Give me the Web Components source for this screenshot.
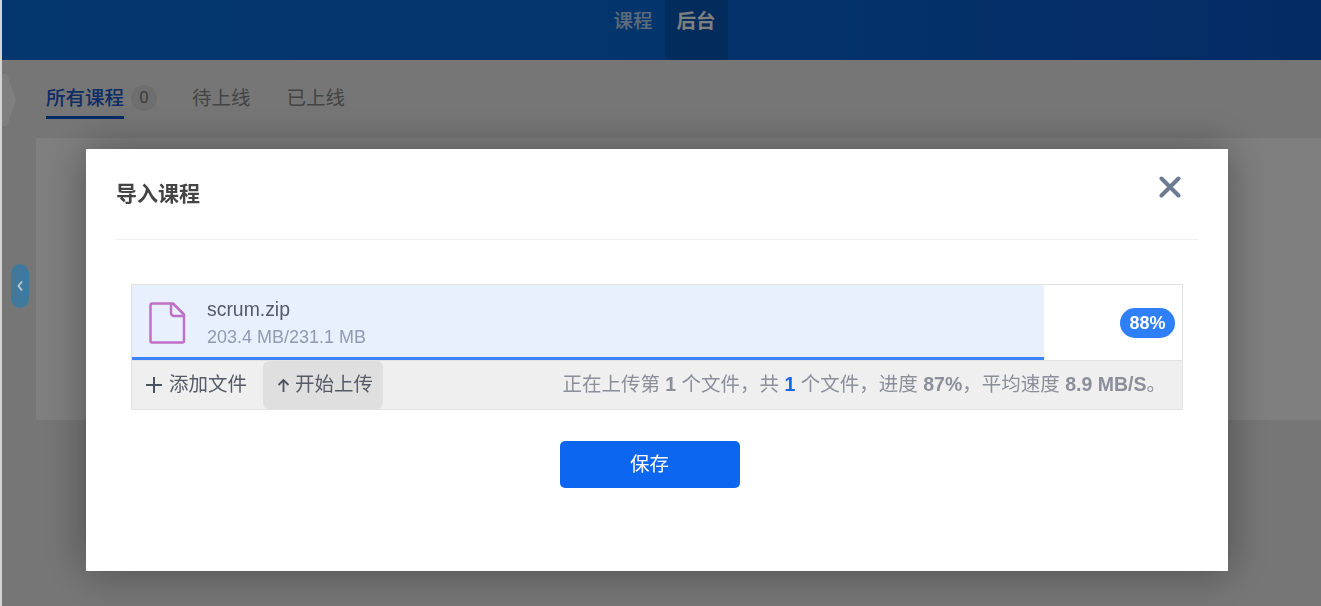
<!DOCTYPE html>
<html lang="zh">
<head>
<meta charset="utf-8">
<title>导入课程</title>
<style>
html, body { margin: 0; height: 100%; overflow: hidden; }
body {
  background: #ececec;
  border-left: 2px solid #d4d4d4;
  box-sizing: border-box;
  font-family: "Liberation Sans", "Noto Sans CJK SC", sans-serif;
  font-size: 19.5px;
}
</style>
</head>
<body>
<app-header></app-header>
<course-tabs></course-tabs>
<course-panel></course-panel>
<side-notch></side-notch>
<side-toggle></side-toggle>
<import-dialog>
  <upload-box></upload-box>
</import-dialog>

<script>
function defineEl(name, html) {
  customElements.define(name, class extends HTMLElement {
    constructor() {
      super();
      this.attachShadow({mode: 'open'}).innerHTML = html;
    }
  });
}

defineEl('app-header', `
<style>
:host {
  display: flex;
  justify-content: center;
  height: 60px;
  padding-left: 6px;
  background: linear-gradient(90deg, #0a6ede 0%, #0869d8 50%, #0a56ca 100%);
}
a {
  display: block;
  padding: 0 12px;
  height: 60px;
  line-height: 43px;
  font-weight: 500;
  color: #ffffff;
  opacity: .72;
}
a.on { background: rgba(0,0,0,.14); opacity: 1; font-weight: 700; }
</style>
<a>课程</a><a class="on">后台</a>
`);

defineEl('course-tabs', `
<style>
:host {
  display: flex;
  align-items: flex-start;
  height: 78px;
  padding-left: 44px;
  color: #888;
}
span { display: block; margin-top: 24px; line-height: 28px; }
.on { color: #1a5ac8; font-weight: 500; border-bottom: 3px solid #0a56c8; box-sizing: border-box; height: 35px; }
.num {
  width: 26px; height: 26px; line-height: 26px; margin: 25px 0 0 7px;
  border-radius: 50%; background: #ddd; text-align: center; font-size: 16px; color: #777;
}
.next { margin-left: 35px; }
.next + .next { margin-left: 36px; }
</style>
<span class="on">所有课程</span><span class="num">0</span>
<span class="next">待上线</span><span class="next">已上线</span>
`);

defineEl('course-panel', `
<style>
:host {
  display: block;
  height: 282px;
  margin-left: 34px;
  background: #fff;
}
</style>
`);

defineEl('side-notch', `
<style>
:host {
  position: fixed;
  left: 2px;
  top: 74px;
  width: 14px;
  height: 52px;
  background: #fff;
  clip-path: polygon(0 0, 35% 0, 100% 50%, 35% 100%, 0 100%);
}
</style>
`);

defineEl('side-toggle', `
<style>
:host {
  position: fixed;
  z-index: 20;
  left: 11px;
  top: 264px;
  width: 18px;
  height: 44px;
  border-radius: 9px;
  background: #3f7a9e;
  display: flex;
  align-items: center;
  justify-content: center;
}
</style>
<svg width="8" height="12" viewBox="0 0 8 12"><path d="M6 1.5 2.500 6l3.500 4.500" fill="none" stroke="#b9c6cc" stroke-width="2"/></svg>
`);

defineEl('import-dialog', `
<style>
:host {
  position: fixed;
  z-index: 10;
  inset: 0 0 0 2px;
  background: rgba(0,0,0,.5);
}
.modal {
  position: absolute;
  left: 84px;
  top: 149px;
  width: 1142px;
  height: 422px;
  box-sizing: border-box;
  padding: 0 30px;
  background: #fff;
  box-shadow: 0 0 40px rgba(0,0,0,.35);
}
.head {
  display: flex;
  justify-content: space-between;
  height: 90px;
  border-bottom: 1px solid #f0f0f0;
  color: #444;
}
h2 { margin: 30px 0 0; font-size: 21px; line-height: 29px; font-weight: 700; }
.close { margin: 27px 17px 0 0; }
.body { padding: 44px 15px 0; }
.actions { display: flex; justify-content: center; margin-top: 31px; padding-right: 15px; }
button {
  width: 180px; height: 47px; border: 0; border-radius: 5px; padding: 0 0 4px;
  background: #0d66ef; color: #fff; font: inherit; font-size: 19.5px;
}
</style>
<div class="modal">
  <div class="head">
    <h2>导入课程</h2>
    <svg class="close" width="22" height="22" viewBox="0 0 22 22"><path d="M2.5 2.5l17 17M19.500 2.500l-17 17" fill="none" stroke="#6d7b92" stroke-width="4" stroke-linecap="round"/></svg>
  </div>
  <div class="body"><slot></slot></div>
  <div class="actions"><button>保存</button></div>
</div>
`);

defineEl('upload-box', `
<style>
:host { display: block; border: 1px solid #e2e2e2; width: 1052px; box-sizing: border-box; }
.file {
  display: flex;
  align-items: center;
  height: 76px;
  box-sizing: border-box;
  padding: 0 7px 0 17px;
  background:
    linear-gradient(#3b82f6, #3b82f6) 0 100% / 912px 3px no-repeat,
    linear-gradient(#e8f0fe, #e8f0fe) 0 0 / 912px 100% no-repeat;
  border-bottom: 1px solid #e2e2e2;
}
.file svg { margin-right: 20px; flex: none; }
.info { flex: 1; padding-top: 1px; }
.name { color: #555b66; line-height: 28px; font-size: 19.4px; }
.size { color: #8f9bb0; line-height: 28px; font-size: 18px; }
.pct {
  width: 55px; height: 30px; line-height: 30px; border-radius: 15px;
  background: #2f7ff8; color: #fff; text-align: center; font-size: 18px; font-weight: 700; margin-top: 1px;
}
.bar {
  display: flex;
  align-items: center;
  height: 48px;
  background: #efefef;
  color: #555b66;
}
.add { display: flex; align-items: center; height: 48px; box-sizing: border-box; padding: 0 16px 6px 14px; }
.add svg { margin: 6px 7px 0 0; }
.start {
  display: flex; align-items: center; width: 120px; height: 48px; box-sizing: border-box; padding: 0 0 6px 14px;
  background: #dfdfdf; border-radius: 6px;
}
.start svg { margin: 6px 5px 0 0; }
.status { margin-left: auto; padding: 0 16px 6px 0; color: #8b8f9a; white-space: pre; }
b { font-weight: 700; }
b.blue { color: #1c66e6; }
</style>
<div class="file">
  <svg width="38" height="44" viewBox="0 0 38 44"><path d="M3 2.500h21l11 11V40a1.500 1.500 0 0 1-1.500 1.500h-31A1.500 1.500 0 0 1 1.500 40V4A1.500 1.500 0 0 1 3 2.500zM22 2.500V12a3 3 0 0 0 3 3h10" fill="none" stroke="#bf6fc4" stroke-width="2.500" stroke-linejoin="round"/></svg>
  <div class="info">
    <div class="name">scrum.zip</div>
    <div class="size">203.4 MB/231.1 MB</div>
  </div>
  <div class="pct">88%</div>
</div>
<div class="bar">
  <div class="add"><svg width="16" height="16" viewBox="0 0 16 16"><path d="M8 0v16M0 8h16" stroke="#4c5360" stroke-width="2" fill="none"/></svg>添加文件</div>
  <div class="start"><svg width="13" height="14" viewBox="0 0 13 14"><path d="M6.500 14V2M1.500 7l5-5 5 5" stroke="#4c5360" stroke-width="1.800" fill="none"/></svg>开始上传</div>
  <div class="status">正在上传第 <b>1</b> 个文件，共 <b class="blue">1</b> 个文件，进度 <b>87%</b>，平均速度 <b>8.9 MB/S</b>。</div>
</div>
`);
</script>
</body>
</html>
